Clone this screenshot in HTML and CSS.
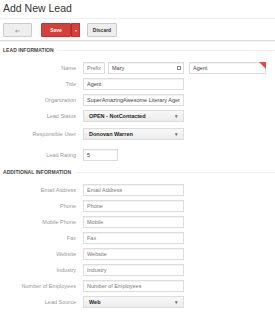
FILE: index.html
```html
<!DOCTYPE html>
<html lang="en">

<head>
    <meta charset="UTF-8">
    <meta name="viewport" content="width=device-width, initial-scale=1.0">
    <title>Add New Lead</title>
    <link rel="stylesheet" href="styles.css">
</head>

<body>
    <h1 class="page-title">Add New Lead</h1>

    <div class="toolbar">
        <button class="btn btn-back">&#8656;</button>
        <div class="btn-split">
            <button class="btn btn-save">Save</button>
            <button class="btn btn-save btn-caret">&#9662;</button>
        </div>
        <button class="btn btn-discard">Discard</button>
    </div>

    <div class="section-title">Lead Information</div>

    <div class="row">
        <label>Name</label>
        <div class="field name-field">
            <input class="input prefix" type="text" placeholder="Prefix">
            <div class="with-icon">
                <input class="input first" type="text" value="Mary">
                <span class="card-icon"></span>
            </div>
            <div class="with-error">
                <input class="input last" type="text" value="Agent">
                <span class="error-corner"></span>
            </div>
        </div>
    </div>

    <div class="row">
        <label>Title</label>
        <div class="field"><input class="input" type="text" value="Agent"></div>
    </div>

    <div class="row">
        <label>Organization</label>
        <div class="field"><input class="input" type="text" value="SuperAmazingAwesome Literary Agency"></div>
    </div>

    <div class="row select-row">
        <label>Lead Status</label>
        <div class="field"><div class="select">OPEN - NotContacted</div></div>
    </div>

    <div class="row select-row">
        <label>Responsible User</label>
        <div class="field"><div class="select">Donovan Warren</div></div>
    </div>

    <div class="row rating-row">
        <label>Lead Rating</label>
        <div class="field"><input class="input short" type="text" value="5"></div>
    </div>

    <div class="section-title second">Additional Information</div>

    <div class="row">
        <label>Email Address</label>
        <div class="field"><input class="input" type="text" placeholder="Email Address"></div>
    </div>
    <div class="row">
        <label>Phone</label>
        <div class="field"><input class="input" type="text" placeholder="Phone"></div>
    </div>
    <div class="row">
        <label>Mobile Phone</label>
        <div class="field"><input class="input" type="text" placeholder="Mobile"></div>
    </div>
    <div class="row">
        <label>Fax</label>
        <div class="field"><input class="input" type="text" placeholder="Fax"></div>
    </div>
    <div class="row">
        <label>Website</label>
        <div class="field"><input class="input" type="text" placeholder="Website"></div>
    </div>
    <div class="row">
        <label>Industry</label>
        <div class="field"><input class="input" type="text" placeholder="Industry"></div>
    </div>
    <div class="row">
        <label>Number of Employees</label>
        <div class="field"><input class="input" type="text" placeholder="Number of Employees"></div>
    </div>
    <div class="row">
        <label>Lead Source</label>
        <div class="field"><div class="select">Web</div></div>
    </div>
</body>
</html>
```

FILE: styles.css
```css
* {
    margin: 0;
    padding: 0;
    box-sizing: border-box;
    font-family: "Liberation Sans", Arial, sans-serif;
}

body {
    background: #fff;
    color: #333;
    overflow: hidden;
}

.page-title {
    height: 19px;
    padding: 3px 0 0 3px;
    font-size: 10.5px;
    line-height: 11px;
    font-weight: normal;
    color: #333;
    border-bottom: 1px solid #eee;
}

.toolbar {
    display: flex;
    gap: 7px;
    padding: 4px 3px 3px;
    border-bottom: 1px solid #ddd;
    box-shadow: 0 1px 0 #f4f4f4;
}

.btn {
    height: 14px;
    border: 1px solid #ccc;
    border-radius: 1px;
    background: #eee;
    font-size: 5px;
    font-weight: bold;
    color: #333;
    cursor: pointer;
}

.btn-back {
    width: 29px;
    font-size: 6px;
    color: #777;
    font-weight: normal;
}

.btn-split {
    display: flex;
    margin-left: 2px;
}

.btn-save {
    width: 30px;
    background: #d6403a;
    border-color: #c9302c;
    color: #fff;
}

.btn-caret {
    width: 9px;
    border-left: 1px solid #b52b27;
    font-size: 4px;
    color: #f3c6c4;
}

.btn-discard {
    width: 30px;
    background: #eee;
}

.section-title {
    display: flex;
    align-items: center;
    gap: 4px;
    height: 8px;
    margin: 5px 0 8px 3px;
    font-size: 5px;
    font-weight: bold;
    text-transform: uppercase;
    color: #444;
    letter-spacing: 0.05px;
}

.section-title::after {
    content: '';
    flex: 1;
    height: 1px;
    background: #f0f0f0;
}

.section-title.second {
    margin-top: 7px;
}

.row {
    display: grid;
    grid-template-columns: 80px 1fr;
    align-items: center;
    height: 12px;
    margin-bottom: 4px;
}

.row label {
    text-align: right;
    padding-right: 4px;
    font-size: 5.5px;
    color: #999;
    white-space: nowrap;
}

.field {
    display: flex;
    align-items: center;
    padding-left: 3px;
}

.input {
    display: block;
    width: 101px;
    height: 12px;
    padding: 0 3px;
    border: 1px solid #ddd;
    box-shadow: inset 0 1px 0 #f2f2f2;
    font-size: 5.5px;
    color: #444;
    outline: none;
    background: #fff;
}

.input::placeholder {
    color: #777;
}

.input.short {
    width: 35px;
}

.name-field {
    gap: 3px;
}

.input.prefix {
    width: 22px;
}

.with-icon,
.with-error {
    position: relative;
}

.input.first {
    width: 76px;
}

.input.last {
    width: 77px;
    margin-left: 2px;
}

.card-icon {
    position: absolute;
    right: 3px;
    top: 4px;
    width: 4px;
    height: 4px;
    border: 1px solid #888;
}

.error-corner {
    position: absolute;
    right: 0;
    top: 0;
    width: 0;
    height: 0;
    border-top: 7px solid #e8483f;
    border-left: 7px solid transparent;
}

.select-row {
    margin-top: 4px;
    margin-bottom: 6px;
}

.rating-row {
    margin-top: 9px;
}

.select {
    position: relative;
    width: 101px;
    height: 12px;
    padding: 0 5px;
    border: 1px solid #ddd;
    background: linear-gradient(#f8f8f8, #ececec);
    font-size: 5.5px;
    line-height: 10px;
    font-weight: bold;
    color: #222;
}

.select::after {
    content: '▾';
    position: absolute;
    right: 5px;
    top: 0;
    font-size: 5px;
    color: #777;
}
```
